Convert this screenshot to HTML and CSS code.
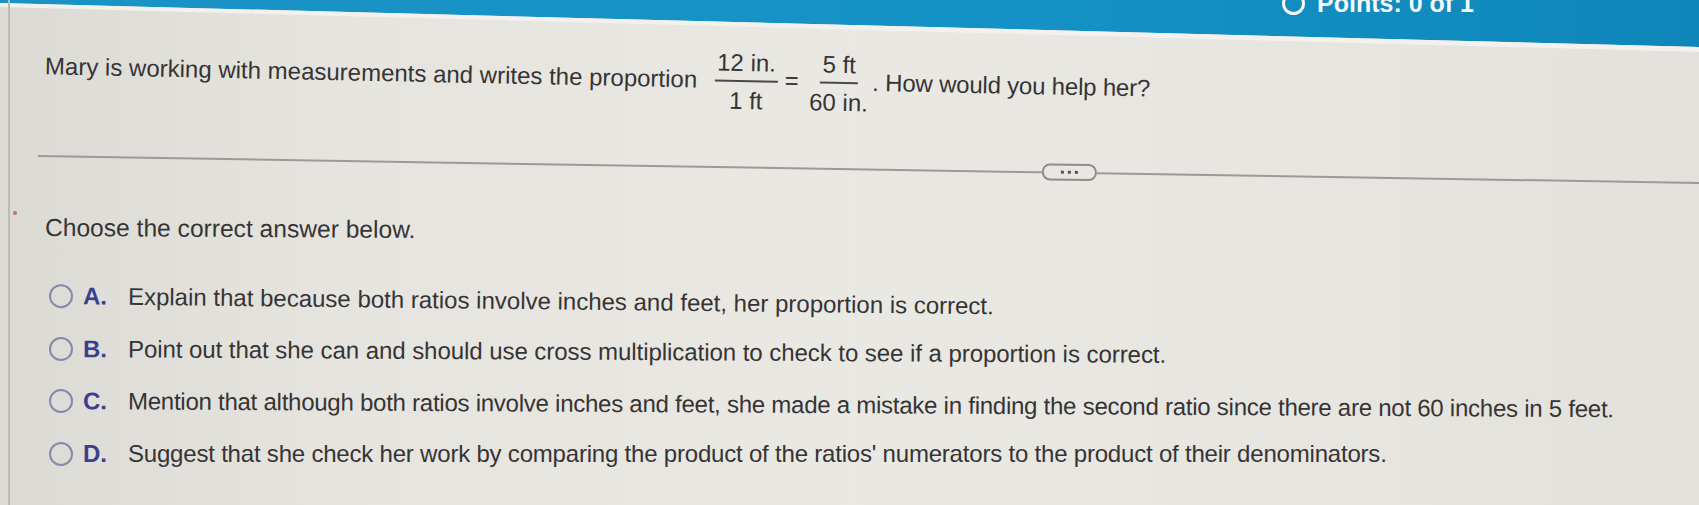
FILE: index.html
```html
<!DOCTYPE html>
<html lang="en">
<head>
<meta charset="utf-8">
<title>Question</title>
<link rel="stylesheet" href="styles.css">
</head>
<body>
<div class="page">
  <div class="topbar">
    <div class="points"><span class="ring"></span><span>Points: 0 of 1</span></div>
  </div>
  <div class="topedge"></div>
  <div class="sideline"></div>
  <span class="mark"></span>
  <main class="content">
    <p class="question">Mary is working with measurements and writes the proportion <span class="frac frac-first"><span class="num">12 in.</span><span class="den">1 ft</span></span><span class="eq">=</span><span class="frac"><span class="num">5 ft</span><span class="den">60 in.</span></span><span class="tail">. How would you help her?</span></p>
    <div class="divider">
      <span class="rule rule-left"></span>
      <span class="more"><i></i><i></i><i></i></span>
      <span class="rule rule-right"></span>
    </div>
    <p class="prompt">Choose the correct answer below.</p>
    <ul class="options">
      <li class="option tilt-a"><span class="radio"></span><span class="letter">A.</span><span class="text">Explain that because both ratios involve inches and feet, her proportion is correct.</span></li>
      <li class="option tilt-b"><span class="radio"></span><span class="letter">B.</span><span class="text">Point out that she can and should use cross multiplication to check to see if a proportion is correct.</span></li>
      <li class="option tilt-c"><span class="radio"></span><span class="letter">C.</span><span class="text">Mention that although both ratios involve inches and feet, she made a mistake in finding the second ratio since there are not 60 inches in 5 feet.</span></li>
      <li class="option tilt-d"><span class="radio"></span><span class="letter">D.</span><span class="text">Suggest that she check her work by comparing the product of the ratios' numerators to the product of their denominators.</span></li>
    </ul>
  </main>
</div>
</body>
</html>
```

FILE: styles.css
```css
* { box-sizing: border-box; }
html, body { margin: 0; padding: 0; }
body {
  width: 1699px;
  height: 505px;
  overflow: hidden;
  font-family: "Liberation Sans", Arial, sans-serif;
  color: #363435;
}
.page {
  position: relative;
  width: 1699px;
  height: 505px;
  overflow: hidden;
  background: linear-gradient(90deg, #dcdad5 0%, #e6e4df 20%, #eae8e3 50%, #e7e5e0 80%, #e3e1dc 100%);
}
.topbar {
  position: absolute;
  left: 0;
  top: 0;
  width: 1699px;
  height: 52px;
  background: linear-gradient(90deg, #1a93c6 0%, #1592c5 60%, #0f86b9 100%);
  clip-path: polygon(0 0, 100% 0, 100% 47px, 0 3px);
}
.topedge {
  position: absolute;
  left: 0;
  top: 0;
  width: 1699px;
  height: 56px;
  background: #f2f1ee;
  clip-path: polygon(0 3px, 100% 47px, 100% 52px, 0 7px);
}
.points {
  position: absolute;
  left: 1282px;
  top: -11px;
  display: flex;
  align-items: center;
  gap: 12px;
  color: #f4f8fa;
  font-weight: bold;
  font-size: 25px;
}
.ring {
  width: 23px;
  height: 23px;
  border: 3px solid #f4f8fa;
  border-radius: 50%;
}
.sideline {
  position: absolute;
  left: 8px;
  top: 0;
  width: 2px;
  height: 505px;
  background: #bdbbb7;
}
.mark {
  position: absolute;
  left: 13px;
  top: 211px;
  width: 4px;
  height: 4px;
  border-radius: 50%;
  background: #c9687c;
}
.content {
  padding: 35px 0 0 45px;
}
.question {
  margin: 0;
  font-size: 24px;
  line-height: 58px;
  white-space: nowrap;
  transform-origin: 0 50%;
  transform: rotate(1.15deg);
}
.frac {
  display: inline-flex;
  flex-direction: column;
  align-items: center;
  vertical-align: middle;
  line-height: 28px;
  margin: 0 2px 0 4px;
}
.frac-first {
  margin-left: 11px;
}
.tail {
  letter-spacing: -0.2px;
}
.num {
  padding: 0 2px 3px;
  border-bottom: 2px solid #4a4849;
}
.den {
  padding: 5px 2px 0;
}
.eq {
  margin: 0 5px;
}
.divider {
  display: flex;
  align-items: center;
  margin: 46px 0 0 -7px;
  width: 1720px;
  transform-origin: 0 50%;
  transform: rotate(0.93deg);
}
.rule {
  height: 2px;
  background: #9c9a98;
}
.rule-left { flex: 0 0 1004px; }
.rule-right { flex: 1 1 auto; }
.more {
  display: flex;
  align-items: center;
  justify-content: center;
  gap: 4px;
  width: 55px;
  height: 17px;
  border: 2px solid #8e8c8a;
  border-radius: 8px;
}
.more i {
  width: 3px;
  height: 3px;
  background: #555;
}
.prompt {
  margin: 49px 0 0;
  font-size: 24.6px;
  line-height: 30px;
  transform-origin: 0 50%;
  transform: rotate(0.3deg);
}
.options {
  list-style: none;
  margin: 38px 0 0 4px;
  padding: 0;
  display: flex;
  flex-direction: column;
  gap: 22.5px;
}
.option {
  display: flex;
  align-items: center;
  height: 30px;
  font-size: 24px;
  white-space: nowrap;
  transform-origin: 0 50%;
}
.tilt-a { transform: rotate(0.62deg); }
.tilt-b { transform: rotate(0.3deg); letter-spacing: -0.05px; }
.tilt-c { transform: rotate(0.3deg); letter-spacing: -0.25px; }
.tilt-d { transform: rotate(0deg); letter-spacing: -0.2px; }
.radio {
  flex: none;
  width: 24px;
  height: 24px;
  border: 2px solid #8a87ad;
  border-radius: 50%;
}
.letter {
  width: 45px;
  margin-left: 10px;
  font-weight: bold;
  color: #3c3f8e;
  letter-spacing: 0;
}
.text {
  color: #363435;
}
```
